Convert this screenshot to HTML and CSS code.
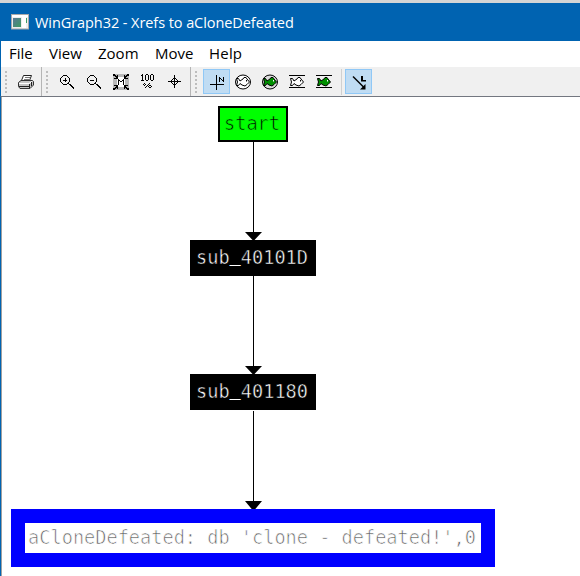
FILE: index.html
```html
<!DOCTYPE html>
<html lang="en">
<head>
<meta charset="utf-8">
<title>WinGraph32 - Xrefs to aCloneDefeated</title>
<link rel="stylesheet" href="styles.css">
</head>
<body>
<svg class="defs" width="0" height="0">
  <defs>
    <path id="fish" d="M1.500 4.500H3.500L5 7L8 5L9 3.500H11L12 5L14.500 8L12 10.500L10 12L7 11L5 9.500L3.500 11.500H1.500L2.500 8Z"/>
  </defs>
</svg>
<div class="window">
  <header class="titlebar">
    <svg class="app-icon" width="19" height="16" viewBox="0 0 19 16">
      <defs><linearGradient id="pane" x2="1" y2="1"><stop stop-color="#5a7796"/><stop offset="1" stop-color="#3d9b62"/></linearGradient></defs>
      <rect x=".5" y=".5" width="17" height="14.500" fill="#eee" stroke="#aaa"/>
      <rect x="1" y="1" width="16" height="2" fill="#fff"/>
      <rect x="2" y="4" width="8" height="9" fill="url(#pane)"/>
      <rect x="11" y="3" width="4" height="11" fill="#fff"/>
      <rect x="15" y="4" width="1" height="5" fill="#3d9b62"/>
    </svg>
    <span class="title">WinGraph32 - Xrefs to aCloneDefeated</span>
  </header>
  <nav class="menu">
    <span class="m-file">File</span><span class="m-view">View</span><span class="m-zoom">Zoom</span><span class="m-move">Move</span><span class="m-help">Help</span>
  </nav>
  <div class="toolbar">
    <i class="grip"></i>
    <span class="tool"><svg viewBox="0 0 16 16" class="soft"><path d="M5.500 1.500H13.500L11.500 6.500H3.500Z" fill="#fff" stroke="#222"/><path d="M7 3.500H12M6 5.500H11" stroke="#777"/><path d="M.5 8.500L3 6.500H14.500L15.500 7.500V11L12 14.500H2L.5 12.500Z" fill="#c4c4c4" stroke="#333"/><path d="M1 9.500H11L14 7.500" stroke="#fff" fill="none"/><path d="M1 12.500H11M11.500 10V14M13.500 8V12" stroke="#222"/></svg></span>
    <i class="sep"></i>
    <i class="grip"></i>
    <span class="tool"><svg viewBox="0 0 16 16" class="line"><path d="M4 1.500H8M4 10.500H8M1.500 4V8M10.500 4V8M2 3.500H3M3 2.500H4M8 2.500H9M9 3.500H10M2 8.500H3M3 9.500H4M8 9.500H9M9 8.500H10M4 6H8M6 4V8"/><path d="M9.500 9.500L15 15M11 10L15 14"/></svg></span>
    <span class="tool"><svg viewBox="0 0 16 16" class="line"><path d="M4 1.500H8M4 10.500H8M1.500 4V8M10.500 4V8M2 3.500H3M3 2.500H4M8 2.500H9M9 3.500H10M2 8.500H3M3 9.500H4M8 9.500H9M9 8.500H10M4 6H8"/><path d="M9.500 9.500L15 15M11 10L15 14"/></svg></span>
    <span class="tool"><svg viewBox="0 0 16 16"><path d="M0 0H16V16H0Z" fill="#b8b8b8"/><path d="M4 3H12V13H4Z" fill="#fff"/><path d="M0 0H2V1H3V2H4V1H5V5H1V4H3V3H2V2H0ZM16 0H14V1H13V2H12V1H11V5H15V4H13V3H14V2H16ZM0 16H2V15H3V14H4V15H5V11H1V12H3V13H2V14H0ZM16 16H14V15H13V14H12V15H11V11H15V12H13V13H14V14H16Z" fill="#000"/><path d="M5 5H6V6H7V7H9V6H10V5H11V11H10V7H9V8H7V7H6V11H5Z" fill="#000"/></svg></span>
    <span class="tool"><svg viewBox="0 0 16 16" class="line"><path d="M1 1.500H3M2.500 0V6M1 6.500H4M5.500 1V6M6 .5H8M8.500 1V6M6 6.500H8M10.500 1V6M11 .5H13M13.500 1V6M11 6.500H13"/><path d="M4 9.500H5M4 11.500H5M3.500 10V11M5.500 10V11M9 11.500H11M9 13.500H11M8.500 12V13M11.500 12V13M5 13.500H6M6 12.500H7M7 11.500H8M8 10.500H9M9 9.500H10"/></svg></span>
    <span class="tool"><svg viewBox="0 0 16 16" class="line"><path d="M7.500 1V14M1 7.500H14M6 4.500H9M5 5.500H6M9 5.500H10M4.500 6V9M10.500 6V9M5 9.500H6M9 9.500H10M6 10.500H9"/></svg></span>
    <i class="sep"></i>
    <i class="grip"></i>
    <span class="tool on"><svg viewBox="0 0 16 16" class="line"><path d="M8.500 1V16M2 10.500H16M11.500 3V8M15.500 3V8M12 4.500H13M13 5.500H14M14 6.500H15"/></svg></span>
    <span class="tool"><svg viewBox="0 0 16 16" class="soft"><ellipse cx="8" cy="8" rx="7.500" ry="7" fill="#fff" stroke="#000"/><use href="#fish" fill="#fff" stroke="#000"/><path d="M11.500 6V7.500" stroke="#000"/></svg></span>
    <span class="tool"><svg viewBox="0 0 16 16" class="soft"><ellipse cx="8" cy="8" rx="7.500" ry="7" fill="#ddd" stroke="#000"/><use href="#fish" fill="#009000" stroke="#000"/><path d="M11.500 6V7.500" stroke="#fff"/></svg></span>
    <span class="tool"><svg viewBox="0 0 16 16" class="soft"><path d="M0 1.500H16M0 13.500H16" stroke="#000"/><use href="#fish" fill="#fff" stroke="#000"/><path d="M11.500 6V7.500" stroke="#000"/></svg></span>
    <span class="tool"><svg viewBox="0 0 16 16" class="soft"><path d="M0 1.500H16M0 13.500H16" stroke="#000"/><use href="#fish" fill="#009000" stroke="#000"/><path d="M11.500 6V7.500" stroke="#fff"/></svg></span>
    <i class="sep short"></i>
    <span class="tool on"><svg viewBox="0 0 16 16" class="soft"><path d="M3 2.500L14 13.500" stroke="#000" stroke-width="1.400"/><path d="M15.500 10V15.500H10Z" fill="#000"/><path d="M11 2H13V6H16V7.500H11Z" fill="#000"/></svg></span>
  </div>
  <main class="canvas">
    <svg class="edges" width="578" height="479" viewBox="2 97 578 479">
      <path d="M253.500 141V240M253.500 276V374M253.500 411V509" stroke="#000"/>
      <path d="M245 232H262L254.500 240H252.500ZM245 366H262L254.500 374H252.500ZM245 501H262L254.500 510H252.500Z"/>
    </svg>
    <div class="node start"><span>start</span></div>
    <div class="node sub first"><span>sub<b class="under">_</b>40101D</span></div>
    <div class="node sub second"><span>sub<b class="under">_</b>401180</span></div>
    <div class="node data"><span>aCloneDefeated: db 'clone - defeated!',0</span></div>
  </main>
</div>
</body>
</html>
```

FILE: styles.css
```css
* { box-sizing: border-box; }
body {
  margin: 0;
  width: 580px;
  height: 576px;
  overflow: hidden;
  background: #fff;
  font-family: "Noto Sans", "Open Sans", sans-serif;
}
.defs { position: absolute; }
.window {
  height: 576px;
  display: flex;
  flex-direction: column;
  border-top: 3px solid #d5d5d5;
}
.titlebar {
  height: 38px;
  flex: none;
  display: flex;
  align-items: center;
  background: #0063b1;
  color: #fff;
  padding: 0 0 0 11px;
}
.app-icon { margin-top: -1px; }
.title {
  font-family: "Open Sans", sans-serif;
  font-size: 14.5px;
  width: 262px;
  margin-left: 5px;
  white-space: nowrap;
  letter-spacing: -.07px;
}
.menu {
  height: 26px;
  flex: none;
  display: flex;
  align-items: center;
  padding: 0 0 2px 8px;
  border-left: 1px solid #0063b1;
  font-family: "Open Sans", sans-serif;
  font-size: 15px;
  color: #000;
}
.m-file { width: 40px; }
.m-view { width: 49px; }
.m-zoom { width: 57px; }
.m-move { width: 54px; }
.m-help { letter-spacing: .2px; }
.toolbar {
  height: 29px;
  flex: none;
  display: flex;
  align-items: center;
  background: #f0f0f0;
  border-left: 1px solid #0063b1;
  padding-left: 4px;
}
.grip {
  width: 2px;
  height: 22px;
  margin-right: 6px;
  background: repeating-linear-gradient(#bdbdbd 0 2px, #f0f0f0 2px 4px);
}
.sep {
  width: 1px;
  height: 29px;
  margin: 0 4px 0 1px;
  background: #b5b5b5;
}
.sep.short { height: 26px; margin: 0 3px; background: #d0d0d0; }
.tool {
  width: 27px;
  height: 25px;
  padding: 5px 0 0 5px;
}
.tool.on {
  background: #c0dcf3;
  border: 1px solid #90c8f6;
  padding: 4px 0 0 4px;
}
.tool svg {
  display: block;
  width: 16px;
  height: 16px;
  fill: none;
  shape-rendering: crispEdges;
}
.tool .line { stroke: #000; }
.tool .soft { shape-rendering: auto; }
.canvas {
  flex: 1;
  position: relative;
  border-left: 1px solid #0063b1;
  border-top: 1px solid #737780;
  box-shadow: inset 1px 0 #a0a0a0;
  background: #fff;
}
.edges { position: absolute; left: 1px; top: 0; }
.node {
  position: absolute;
  display: flex;
  align-items: center;
  justify-content: center;
  font: 18.6px/30px "DejaVu Sans Mono", monospace;
  white-space: pre;
}
.node span { margin: 0 2px 0 0; }
.start {
  left: 217px;
  top: 9px;
  width: 70px;
  height: 36px;
  border: 2px solid #000;
  background: #0f0;
  color: #000;
  -webkit-text-stroke: .6px #0f0;
}
.sub {
  left: 189px;
  width: 126px;
  height: 36px;
  background: #000;
  color: #fff;
  -webkit-text-stroke: .5px #000;
}
.under {
  position: relative;
  top: -3px;
  font-weight: normal;
  -webkit-text-stroke: 0;
}
.first { top: 143px; }
.second { top: 277px; }
.data {
  left: 10px;
  top: 412px;
  width: 484px;
  height: 58px;
  border: 14px solid #00f;
  background: #fff;
  color: #606060;
  -webkit-text-stroke: .7px #fff;
}
```
